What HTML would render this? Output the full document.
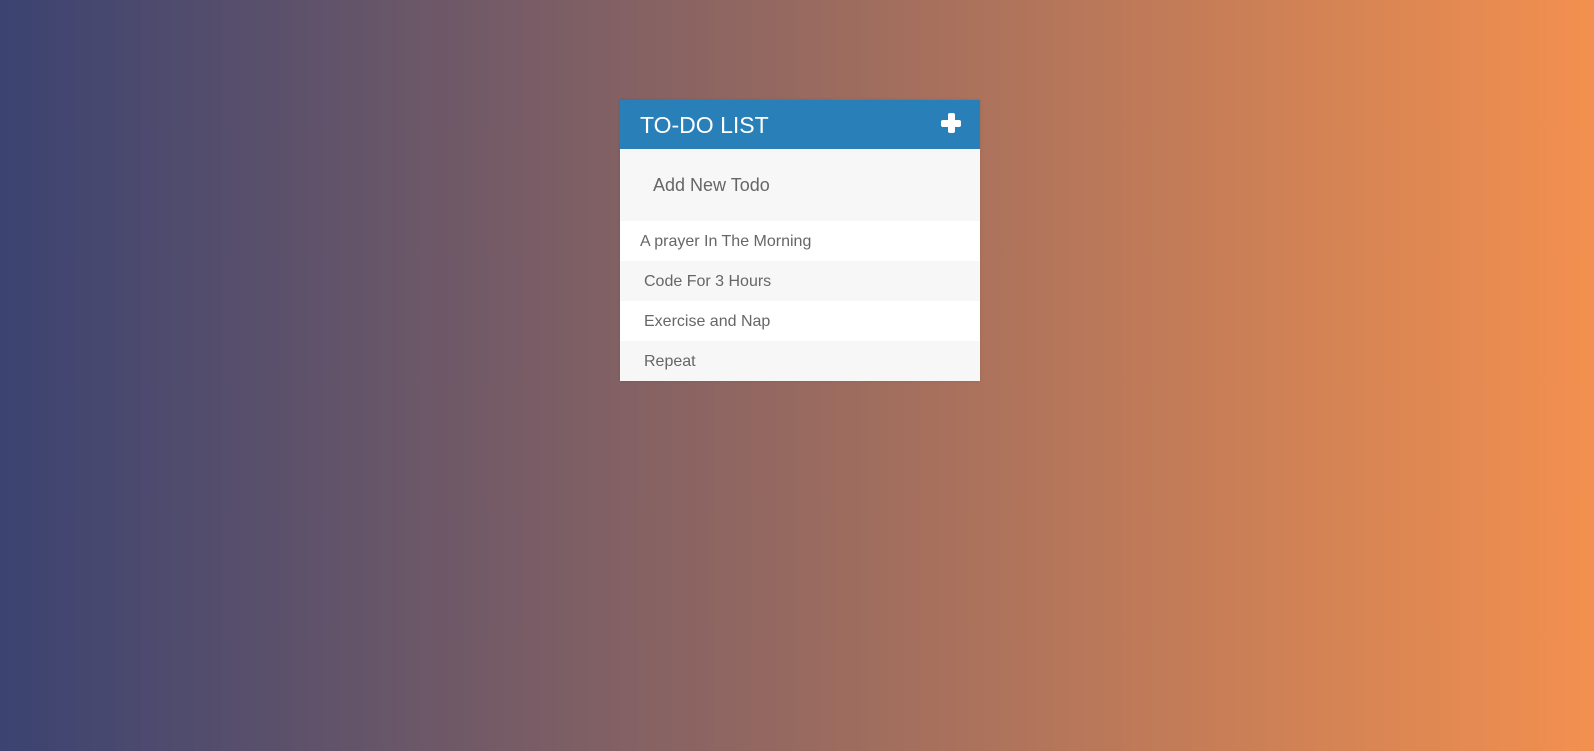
<!DOCTYPE html>
<html><head><style>
html,body{margin:0;height:751px;}
body{background:linear-gradient(to right,#3b4371,#f3904f);font-family:"Liberation Sans",Roboto,sans-serif;position:relative;overflow:hidden;}
#card{position:absolute;left:620px;top:100px;width:360px;background:#f7f7f7;box-shadow:0 0 3px rgba(0,0,0,0.1);}
h1{margin:0;height:49px;background:#2980b9;color:#fff;font-weight:normal;font-size:23px;line-height:51px;padding-left:20px;position:relative;}
.plus{position:absolute;right:19px;top:13px;width:20px;height:20px;}
.plus:before,.plus:after{content:"";position:absolute;background:#fff;border-radius:2px;}
.plus:before{left:6.5px;top:0;width:7px;height:20px;}
.plus:after{left:0;top:6.5px;width:20px;height:7px;}
.inp{height:72px;background:#f7f7f7;color:#666;font-size:18px;line-height:72px;padding-left:33px;}
.it{height:40px;line-height:41px;color:#666;font-size:16px;padding-left:24px;}
.w{background:#fff}.g{background:#f7f7f7}
</style></head><body>
<div id="card">
<h1>TO-DO LIST<span class="plus"></span></h1>
<div class="inp">Add New Todo</div>
<div class="it w" style="padding-left:20px">A prayer In The Morning</div>
<div class="it g">Code For 3 Hours</div>
<div class="it w">Exercise and Nap</div>
<div class="it g">Repeat</div>
</div>
</body></html>
